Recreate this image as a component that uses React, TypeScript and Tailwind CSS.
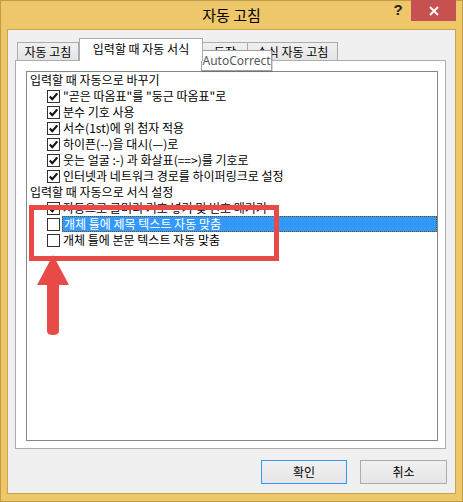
const font = "font-['Noto_Sans_CJK_KR','Noto_Sans',sans-serif]"

function Check({ checked }: { checked: boolean }) {
  return (
    <span className="w-[13px] h-[13px] border border-[#333333] bg-white flex items-center justify-center shrink-0">
      {checked && (
        <svg width="11" height="11" viewBox="0 0 11 11">
          <path d="M1.8 5.6 L4.3 8.2 L9.3 2.4" fill="none" stroke="#111" strokeWidth="2.2" />
        </svg>
      )}
    </span>
  )
}

function Row({ label, checked, selected }: { label: string; checked: boolean; selected?: boolean }) {
  return (
    <div className="h-4 flex items-center pl-[20px]">
      <Check checked={checked} />
      <span
        className={
          selected
            ? "ml-[2px] flex-1 h-[16px] leading-[14px] pl-[1px] bg-[#3399ff] text-white border border-dotted border-[#7a4a10]"
            : "ml-[3px] leading-4"
        }
      >
        {label}
      </span>
    </div>
  )
}

export default function App() {
  const replaceItems = [
    "\"곧은 따옴표\"를 \"둥근 따옴표\"로",
    "분수 기호 사용",
    "서수(1st)에 위 첨자 적용",
    "하이픈(--)을 대시(—)로",
    "웃는 얼굴 :-) 과 화살표(==>)를 기호로",
    "인터넷과 네트워크 경로를 하이퍼링크로 설정",
  ]

  return (
    <div className={`relative w-[463px] h-[502px] bg-[#efc76b] border border-[#bf9d4a] flex flex-col text-[12px] text-black ${font}`}>
      {/* Title bar */}
      <div className="h-[29px] grid grid-cols-[1fr_auto_1fr] -mt-px">
        <div />
        <div className="text-[15px] flex items-center pt-[1px]">자동 고침</div>
        <div className="flex justify-end items-start pr-[6px]">
          <div className="w-[26px] h-[20px] flex items-center justify-center text-[15px] font-bold text-[#222] font-['Liberation_Sans',sans-serif]">?</div>
          <div className="w-[45px] h-[21px] bg-[#c75050] flex items-center justify-center">
            <svg width="10" height="10" viewBox="0 0 10 10">
              <path d="M1 1 L9 9 M9 1 L1 9" stroke="#fff" strokeWidth="2" />
            </svg>
          </div>
        </div>
      </div>

      {/* Client area */}
      <div className="flex-1 mx-[6px] mb-[7px] bg-[#f0f0f0] border border-[#c9a24a] flex flex-col pt-[8px] pl-[7px]">
        {/* Tabs */}
        <div className="flex items-end ml-[2px] h-[22px]">
          <div className="w-[62px] h-[18px] border border-b-0 border-[#acacac] bg-gradient-to-b from-[#f0f0f0] to-[#e5e5e5] flex items-center justify-center">
            자동 고침
          </div>
          <div className="relative z-10 w-[124px] h-[23px] -mb-px border border-b-0 border-[#acacac] bg-white flex items-center justify-center pb-[3px]">
            입력할 때 자동 서식
          </div>
          <div className="w-[45px] h-[18px] border border-b-0 border-l-0 border-[#acacac] bg-gradient-to-b from-[#f0f0f0] to-[#e5e5e5] flex items-center justify-center">
            동작
          </div>
          <div className="w-[90px] h-[18px] border border-b-0 border-l-0 border-[#acacac] bg-gradient-to-b from-[#f0f0f0] to-[#e5e5e5] flex items-center justify-center">
            수식 자동 고침
          </div>
        </div>

        {/* Tab panel */}
        <div className="w-[431px] h-[389px] border border-[#acacac] bg-white pl-[10px] pt-[10px]">
          <div className="w-[412px] h-[370px] border border-[#828790] bg-white">
            <div className="h-4 flex items-center pl-[3px]">입력할 때 자동으로 바꾸기</div>
            {replaceItems.map((t) => (
              <Row key={t} label={t} checked />
            ))}
            <div className="h-4 flex items-center pl-[3px]">입력할 때 자동으로 서식 설정</div>
            <Row label="자동으로 글머리 기호 넣기 및 번호 매기기" checked />
            <Row label="개체 틀에 제목 텍스트 자동 맞춤" checked={false} selected />
            <Row label="개체 틀에 본문 텍스트 자동 맞춤" checked={false} />
          </div>
        </div>

        {/* Buttons */}
        <div className="flex justify-end gap-[13px] mt-[11px] mr-[8px]">
          <button className="w-[86px] h-[24px] border border-[#3399ff] bg-gradient-to-b from-[#f0f0f0] to-[#e5e5e5]">확인</button>
          <button className="w-[87px] h-[24px] border border-[#acacac] bg-gradient-to-b from-[#f0f0f0] to-[#e5e5e5]">취소</button>
        </div>
      </div>

      {/* Tooltip */}
      <div className="absolute left-[200px] top-[49px] w-[71px] h-[21px] bg-white border border-[#a0a0a0] text-[#575757] flex items-center justify-center font-['Noto_Sans',sans-serif] text-[12px] shadow-[1px_1px_1px_rgba(0,0,0,0.15)]">
        AutoCorrect
      </div>

      {/* Annotation */}
      <div className="absolute left-[28px] top-[204px] w-[250px] h-[56px] border-[5px] border-[#e84a48]" />
      <svg className="absolute left-[34px] top-[252px]" width="36" height="84" viewBox="0 0 36 84">
        <path d="M18 2 L34 32 L24 32 L24 78 Q24 82 18 82 Q12 82 12 78 L12 32 L2 32 Z" fill="#e84a48" />
      </svg>
    </div>
  )
}
